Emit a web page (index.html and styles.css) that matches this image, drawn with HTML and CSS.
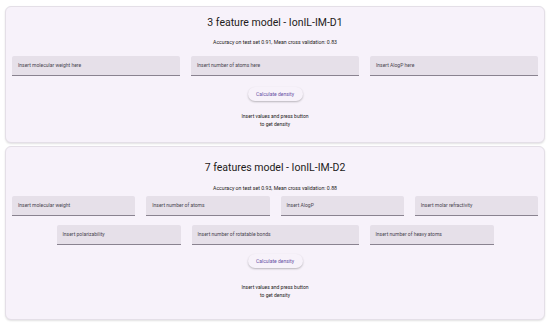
FILE: index.html
```html
<!DOCTYPE html>
<html lang="en">
<head>
    <meta charset="UTF-8">
    <meta name="viewport" content="width=device-width, initial-scale=1.0">
    <title>Ionic Liquid Density</title>
    <link rel="stylesheet" href="styles.css">
</head>
<body>
    <!-- Model D1 -->
    <div class="card card-small">
        <h2 class="title">3 feature model - IonIL-IM-D1</h2>
        <p class="score">Accuracy on test set 0.91, Mean cross validation: 0.83</p>
        <div class="row">
            <div class="field">Insert molecular weight here</div>
            <div class="field">Insert number of atoms here</div>
            <div class="field">Insert AlogP here</div>
        </div>
        <button class="calc">Calculate density</button>
        <p class="result">Insert values and press button<br>to get density</p>
    </div>

    <!-- Model D2 -->
    <div class="card card-big">
        <h2 class="title">7 features model - IonIL-IM-D2</h2>
        <p class="score">Accuracy on test set 0.93, Mean cross validation: 0.88</p>
        <div class="row">
            <div class="field">Insert molecular weight</div>
            <div class="field">Insert number of atoms</div>
            <div class="field">Insert AlogP</div>
            <div class="field">Insert molar refractivity</div>
        </div>
        <div class="row row-center">
            <div class="field narrow">Insert polarizability</div>
            <div class="field wide">Insert number of rotatable bonds</div>
            <div class="field narrow">Insert number of heavy atoms</div>
        </div>
        <button class="calc">Calculate density</button>
        <p class="result">Insert values and press button<br>to get density</p>
    </div>
</body>
</html>
```

FILE: styles.css
```css
/* Global Styles */
body {
    margin: 0;
    padding: 6px 5px;
    font-family: Roboto, "Noto Sans", sans-serif;
    background-color: #ffffff;
    color: #1d1b20;
}

/* Card */
.card {
    display: flex;
    flex-direction: column;
    align-items: center;
    background-color: #f7f2fa;
    border: 1px solid #e4dfe7;
    border-radius: 6px;
    box-shadow: 0 1px 2px rgba(0, 0, 0, 0.12);
    padding: 10px 6px 0 6px;
    box-sizing: border-box;
}

.card-small {
    height: 137px;
    margin-bottom: 3px;
}

.card-big {
    height: 174px;
    padding-top: 15px;
}

.title {
    margin: 0;
    font-size: 10.5px;
    font-weight: 400;
    line-height: 12px;
    color: #1d1b20;
}

.score {
    margin: 10px 0 11px 0;
    font-size: 5.2px;
    line-height: 6px;
    color: #1d1b20;
}

.card-big .score {
    margin: 11px 0 5px 0;
}

/* Inputs */
.row {
    display: flex;
    gap: 11px;
    width: 100%;
}

.row .field {
    flex: 1;
}

.row-center {
    justify-content: center;
    margin-top: 9px;
}

.row-center .field {
    flex: none;
}

.field.narrow {
    width: 124px;
}

.field.wide {
    width: 167px;
}

.field {
    height: 20px;
    background-color: #e6e0e9;
    border-bottom: 1px solid #8a8390;
    border-radius: 2px 2px 0 0;
    padding-left: 6px;
    box-sizing: border-box;
    font-size: 5px;
    line-height: 19px;
    color: #49454f;
}

/* Button */
.calc {
    margin-top: 11px;
    width: 55px;
    height: 14px;
    padding: 0;
    border: none;
    border-radius: 7px;
    background-color: #f7f2fa;
    box-shadow: 0 1px 2px rgba(0, 0, 0, 0.25);
    font-family: Roboto, "Noto Sans", sans-serif;
    font-size: 5px;
    color: #6750a4;
    cursor: pointer;
}

.result {
    margin: 11px 0 0 0;
    font-size: 5px;
    line-height: 8px;
    text-align: center;
    color: #1d1b20;
}

.card-big .calc {
    margin-top: 9px;
}

.card-big .result {
    margin-top: 15px;
}
```
